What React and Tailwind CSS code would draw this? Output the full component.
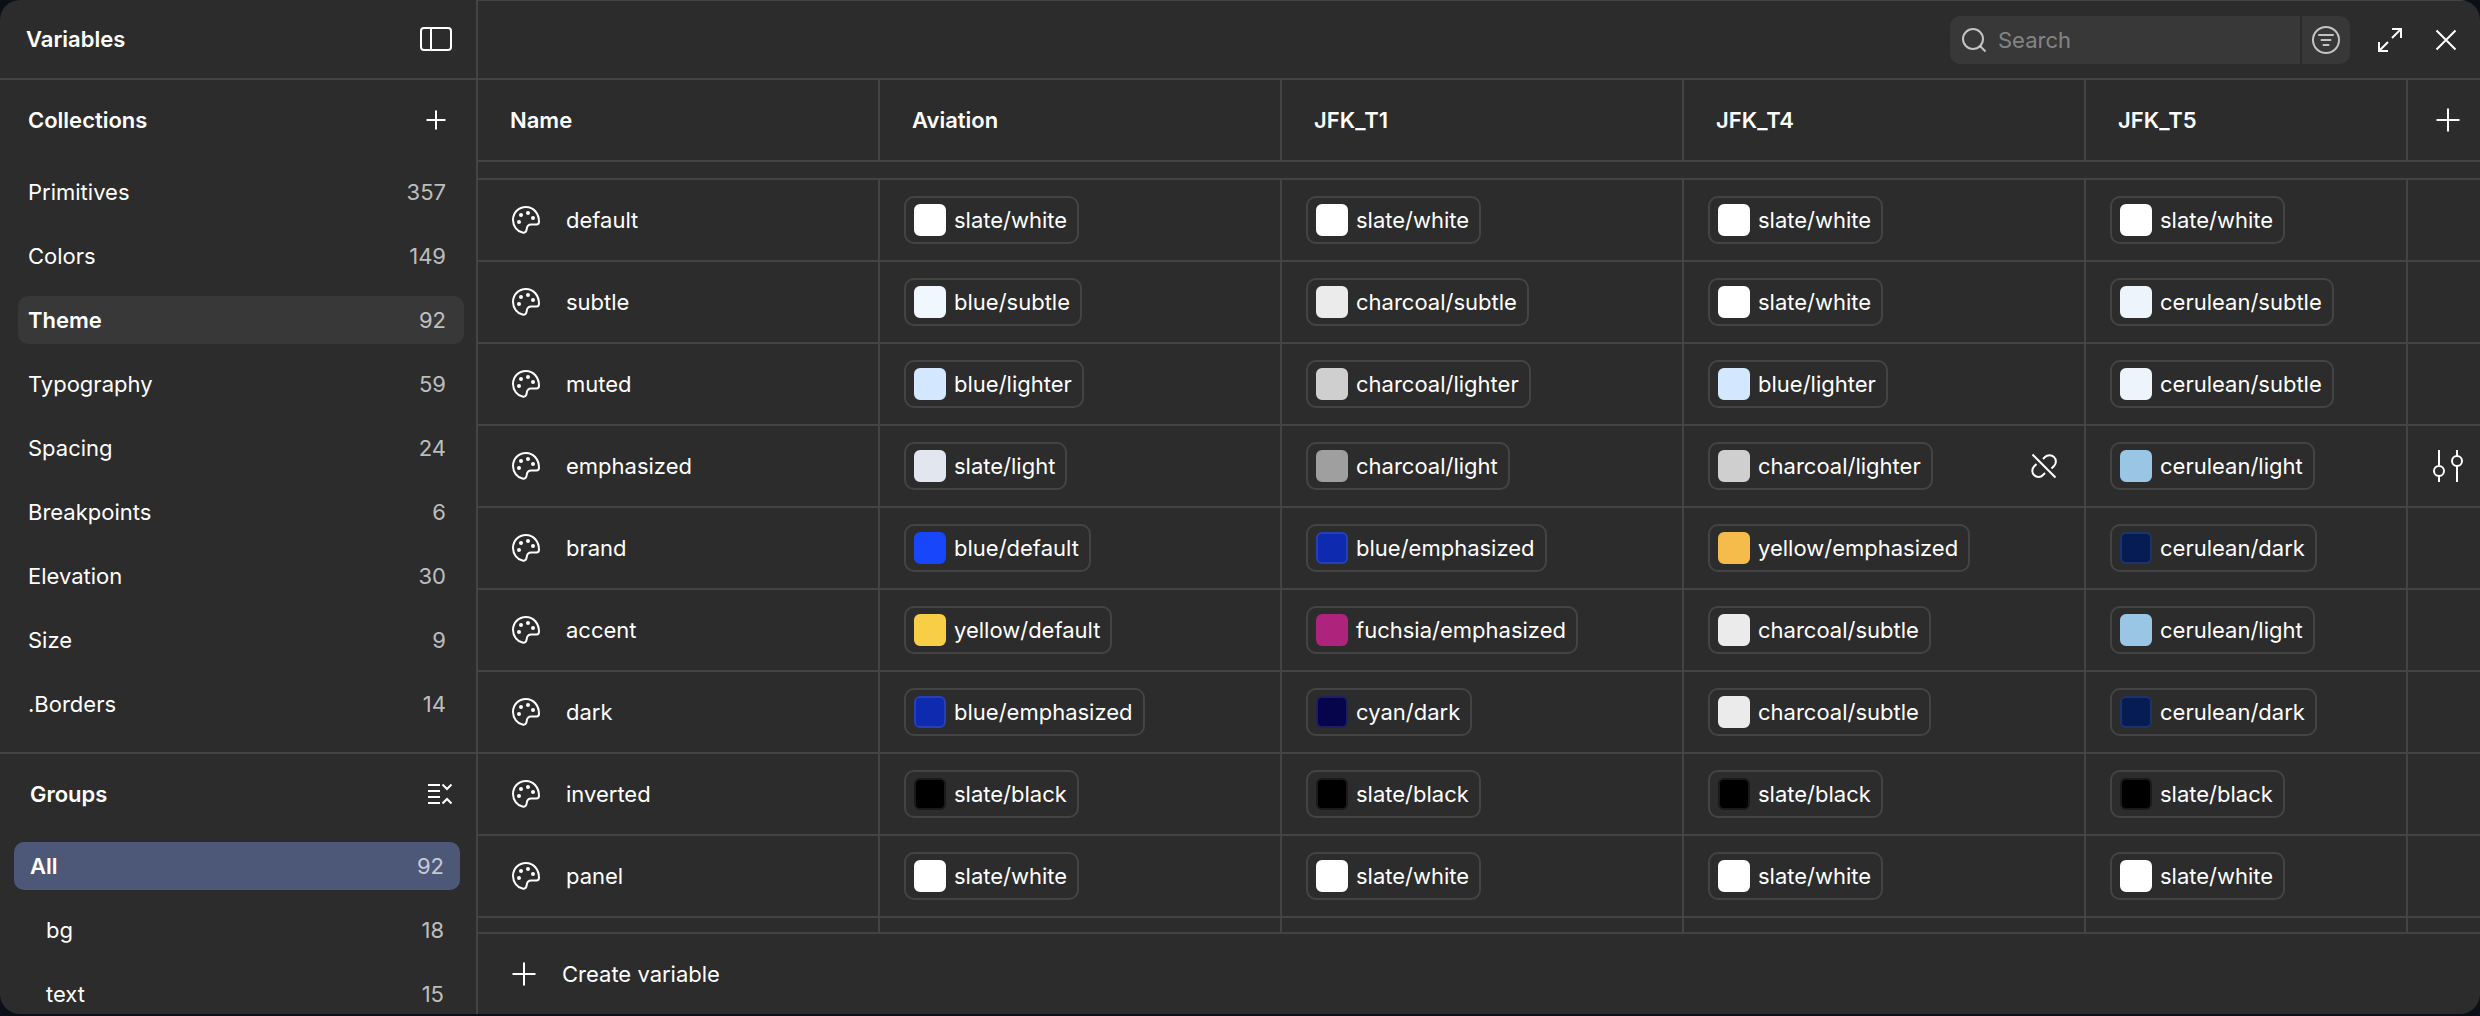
import React, { useState } from 'react';

const collections = [
  { name: 'Primitives', count: 357 },
  { name: 'Colors', count: 149 },
  { name: 'Theme', count: 92 },
  { name: 'Typography', count: 59 },
  { name: 'Spacing', count: 24 },
  { name: 'Breakpoints', count: 6 },
  { name: 'Elevation', count: 30 },
  { name: 'Size', count: 9 },
  { name: '.Borders', count: 14 },
];

const groups = [
  { name: 'All', count: 92 },
  { name: 'bg', count: 18, nested: true },
  { name: 'text', count: 15, nested: true },
];

const modes = ['Aviation', 'JFK_T1', 'JFK_T4', 'JFK_T5'];

const swatches = {
  'slate/white': 'bg-white border-white',
  'slate/light': 'bg-[#e2e6ee] border-[#e2e6ee]',
  'slate/black': 'bg-black border-[#1a1a1a]',
  'blue/subtle': 'bg-[#f0f7ff] border-[#f0f7ff]',
  'blue/lighter': 'bg-[#d3e8ff] border-[#d3e8ff]',
  'blue/default': 'bg-[#1846fa] border-[#1846fa]',
  'blue/emphasized': 'bg-[#0e2bb0] border-[#2640b8]',
  'charcoal/subtle': 'bg-[#ebebeb] border-[#ebebeb]',
  'charcoal/lighter': 'bg-[#cfcfcf] border-[#cfcfcf]',
  'charcoal/light': 'bg-[#9f9f9f] border-[#9f9f9f]',
  'cerulean/subtle': 'bg-[#edf4fb] border-[#edf4fb]',
  'cerulean/light': 'bg-[#9ac6e6] border-[#9ac6e6]',
  'cerulean/dark': 'bg-[#051c55] border-[#1e3367]',
  'yellow/default': 'bg-[#f8ce46] border-[#f8ce46]',
  'yellow/emphasized': 'bg-[#f5bb4b] border-[#f5bb4b]',
  'fuchsia/emphasized': 'bg-[#ae247c] border-[#ae247c]',
  'cyan/dark': 'bg-[#06054b] border-[#1f1e5e]',
};

const variables = [
  {
    name: 'default',
    values: ['slate/white', 'slate/white', 'slate/white', 'slate/white'],
  },
  {
    name: 'subtle',
    values: ['blue/subtle', 'charcoal/subtle', 'slate/white', 'cerulean/subtle'],
  },
  {
    name: 'muted',
    values: [
      'blue/lighter',
      'charcoal/lighter',
      'blue/lighter',
      'cerulean/subtle',
    ],
  },
  {
    name: 'emphasized',
    values: [
      'slate/light',
      'charcoal/light',
      'charcoal/lighter',
      'cerulean/light',
    ],
    hovered: 2,
  },
  {
    name: 'brand',
    values: [
      'blue/default',
      'blue/emphasized',
      'yellow/emphasized',
      'cerulean/dark',
    ],
  },
  {
    name: 'accent',
    values: [
      'yellow/default',
      'fuchsia/emphasized',
      'charcoal/subtle',
      'cerulean/light',
    ],
  },
  {
    name: 'dark',
    values: ['blue/emphasized', 'cyan/dark', 'charcoal/subtle', 'cerulean/dark'],
  },
  {
    name: 'inverted',
    values: ['slate/black', 'slate/black', 'slate/black', 'slate/black'],
  },
  {
    name: 'panel',
    values: ['slate/white', 'slate/white', 'slate/white', 'slate/white'],
  },
];

function Icon({ children }) {
  return (
    <svg
      className="block size-8 shrink-0"
      viewBox="0 0 32 32"
      fill="none"
      stroke="currentColor"
      strokeWidth="2"
      aria-hidden="true"
    >
      {children}
    </svg>
  );
}

function PlusIcon() {
  return (
    <Icon>
      <path d="M16 4.500v23M4.500 16h23" />
    </Icon>
  );
}

function SmallPlusIcon() {
  return (
    <Icon>
      <path d="M16 6.500v19M6.500 16h19" />
    </Icon>
  );
}

function SidebarIcon() {
  return (
    <Icon>
      <rect x="1" y="5" width="30" height="22" rx="3" />
      <path d="M11 5v22" />
    </Icon>
  );
}

function CollapseIcon() {
  return (
    <Icon>
      <path d="M4 7h12M4 13h12M4 19h12M4 25h12" />
      <path d="M18.500 6.500l4.500 4.500 4.500-4.500M18.500 25.500l4.500-4.500 4.500 4.500" />
    </Icon>
  );
}

function PaletteIcon() {
  return (
    <Icon>
      <path d="M16 3C8.500 3 3 8.800 3 16c0 6.500 4.500 11.500 9.500 12.600 2.500.5 4-1.100 4.200-3.400.2-3.300 1.500-4.700 4.600-4.700h5.200c1.700 0 2.500-1 2.500-2.700C29 9.400 23.500 3 16 3z" />
      <g fill="currentColor" stroke="none">
        <circle cx="9" cy="18" r="2" />
        <circle cx="11" cy="11" r="2" />
        <circle cx="18" cy="9" r="2" />
        <circle cx="23" cy="14" r="2" />
      </g>
    </Icon>
  );
}

function SearchIcon() {
  return (
    <Icon>
      <circle cx="15" cy="15" r="10" />
      <path d="M22 22l5.500 5.500" />
    </Icon>
  );
}

function FilterIcon() {
  return (
    <Icon>
      <circle cx="16" cy="16" r="13" />
      <path d="M9 11h14M11.500 16h9M13.500 21h5" strokeLinecap="round" />
    </Icon>
  );
}

function ExpandIcon() {
  return (
    <Icon>
      <path d="M18 5h9v9M27 5l-9 9M14 27H5v-9M5 27l9-9" />
    </Icon>
  );
}

function CloseIcon() {
  return (
    <Icon>
      <path d="M6.500 6.500l19 19M25.500 6.500l-19 19" />
    </Icon>
  );
}

function DetachIcon() {
  return (
    <Icon>
      <path d="M4.500 4.500l23 23" />
      <path d="M15 9l2-2a6.200 6.200 0 0 1 9 9l-2.500 2.500M8.500 14L6 16.500a6 6 0 0 0 9 8.500l2-2" />
    </Icon>
  );
}

function TuneIcon() {
  return (
    <Icon>
      <path d="M7 0v15M7 26v6M25 0v6M25 16v16" />
      <circle cx="7" cy="21" r="5" />
      <circle cx="25" cy="11" r="5" />
    </Icon>
  );
}

function AliasPill({ value }) {
  return (
    <button
      type="button"
      className="flex h-12 items-center gap-2 rounded-[10px] border-2 border-[#444444] pl-2 pr-[10px]"
    >
      <span className={'size-8 rounded-md border-2 ' + swatches[value]} />
      {value}
    </button>
  );
}

function Sidebar() {
  const [collection, setCollection] = useState('Theme');
  const [group, setGroup] = useState('All');

  return (
    <aside className="flex w-[478px] shrink-0 flex-col overflow-hidden border-r-2 border-[#444444]">
      <div className="flex h-20 shrink-0 items-center justify-between border-b-2 border-[#444444] pl-[26px] pr-6">
        <h1 className="font-semibold">Variables</h1>
        <button type="button" aria-label="Toggle sidebar">
          <SidebarIcon />
        </button>
      </div>
      <section className="shrink-0 border-b-2 border-[#444444] pb-4">
        <div className="flex h-20 items-center justify-between pl-7 pr-6">
          <h2 className="font-semibold">Collections</h2>
          <button type="button" aria-label="Create collection">
            <SmallPlusIcon />
          </button>
        </div>
        <ul className="pl-[18px] pr-3">
          {collections.map(({ name, count }) => (
            <li key={name} className="py-2">
              <button
                type="button"
                onClick={() => setCollection(name)}
                className={
                  'flex h-12 w-full items-center justify-between rounded-[10px] pl-[10px] pr-[18px] ' +
                  (collection === name ? 'bg-[#383838] font-semibold' : '')
                }
              >
                <span>{name}</span>
                <span className="font-normal text-white/70">{count}</span>
              </button>
            </li>
          ))}
        </ul>
      </section>
      <section className="min-h-0 flex-1 overflow-hidden">
        <div className="flex h-20 items-center justify-between pl-[30px] pr-5">
          <h2 className="font-semibold">Groups</h2>
          <button type="button" aria-label="Collapse all groups">
            <CollapseIcon />
          </button>
        </div>
        <ul className="pl-[14px] pr-4">
          {groups.map(({ name, count, nested }) => (
            <li key={name} className="py-2">
              <button
                type="button"
                onClick={() => setGroup(name)}
                className={
                  'flex h-12 w-full items-center justify-between rounded-[10px] pr-4 ' +
                  (nested ? 'pl-8 ' : 'pl-4 ') +
                  (group === name ? 'bg-[#4d5878] font-semibold' : '')
                }
              >
                <span>{name}</span>
                <span className="font-normal text-white/70">{count}</span>
              </button>
            </li>
          ))}
        </ul>
      </section>
    </aside>
  );
}

function Toolbar() {
  return (
    <div className="flex h-20 shrink-0 items-center justify-end border-b-2 border-t border-[#444444] pr-[18px] pt-px">
      <div className="flex h-12 gap-[2px] overflow-hidden rounded-[10px]">
        <label className="flex w-[350px] items-center gap-2 bg-[#383838] pl-2">
          <span className="text-white/70">
            <SearchIcon />
          </span>
          <input
            type="text"
            aria-label="Search"
            placeholder="Search"
            className="w-full bg-transparent outline-none placeholder:text-white/40"
          />
        </label>
        <button
          type="button"
          aria-label="Filter"
          className="flex w-12 items-center justify-center bg-[#383838] text-white/70"
        >
          <FilterIcon />
        </button>
      </div>
      <button type="button" aria-label="Expand" className="ml-6">
        <ExpandIcon />
      </button>
      <button type="button" aria-label="Close" className="ml-6">
        <CloseIcon />
      </button>
    </div>
  );
}

function VariablesTable() {
  return (
    <table className="w-full table-fixed border-separate border-spacing-0 text-left">
      <colgroup>
        <col className="w-[402px]" />
        <col className="w-[402px]" />
        <col className="w-[402px]" />
        <col className="w-[402px]" />
        <col />
        <col className="w-[72px]" />
      </colgroup>
      <thead>
        <tr className="h-[82px]">
          <th className="border-b-2 border-r-2 border-[#444444] pl-8 font-semibold">
            Name
          </th>
          {modes.map((mode) => (
            <th
              key={mode}
              className="border-b-2 border-r-2 border-[#444444] pl-8 font-semibold"
            >
              {mode}
            </th>
          ))}
          <th className="border-b-2 border-[#444444]">
            <button
              type="button"
              aria-label="Add mode"
              className="ml-6 block"
            >
              <PlusIcon />
            </button>
          </th>
        </tr>
      </thead>
      <tbody>
        <tr className="h-[18px]">
          <td colSpan={6} className="border-b-2 border-[#444444]" />
        </tr>
        {variables.map(({ name, values, hovered }) => (
          <tr key={name} className="h-[82px]">
            <td className="border-b-2 border-r-2 border-[#444444] pl-8">
              <div className="flex items-center gap-6">
                <PaletteIcon />
                {name}
              </div>
            </td>
            {values.map((value, i) => (
              <td
                key={modes[i]}
                className="border-b-2 border-r-2 border-[#444444] px-6"
              >
                <div className="flex items-center justify-between">
                  <AliasPill value={value} />
                  {hovered === i && (
                    <button type="button" aria-label="Detach alias">
                      <DetachIcon />
                    </button>
                  )}
                </div>
              </td>
            ))}
            <td className="border-b-2 border-[#444444]">
              {hovered !== undefined && (
                <button
                  type="button"
                  aria-label="Edit variable"
                  className="ml-6 block"
                >
                  <TuneIcon />
                </button>
              )}
            </td>
          </tr>
        ))}
        <tr className="h-[14px]">
          {['name', ...modes].map((key) => (
            <td key={key} className="border-r-2 border-[#444444]" />
          ))}
          <td />
        </tr>
      </tbody>
    </table>
  );
}

function App() {
  return (
    <div className="min-h-screen bg-[#0c0e18] pb-[2px] font-['Inter',sans-serif] text-[22px] leading-8 text-white [font-optical-sizing:none]">
      <div className="flex h-[calc(100vh-2px)] overflow-hidden rounded-[20px] bg-[#2c2c2c]">
        <Sidebar />
        <main className="flex min-w-0 flex-1 flex-col">
          <Toolbar />
          <VariablesTable />
          <div className="flex flex-1 items-center border-t-2 border-[#444444] pl-[30px]">
            <button type="button" className="flex items-center gap-[22px]">
              <PlusIcon />
              Create variable
            </button>
          </div>
        </main>
      </div>
    </div>
  );
}

export default App;
